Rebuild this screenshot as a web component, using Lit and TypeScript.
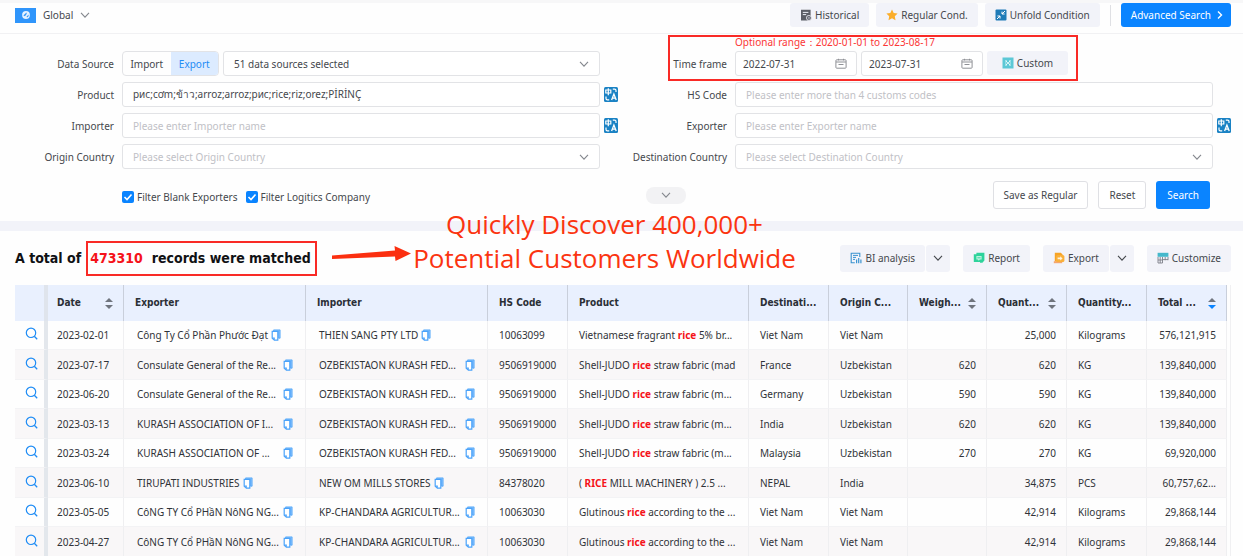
import { LitElement, html, css, svg } from "lit";
import { customElement, property } from "lit/decorators.js";
import { classMap } from "lit/directives/class-map.js";

const chevron = (cls = "") => svg`<svg class="chev ${cls}" viewBox="0 0 10 10" width="10" height="10" aria-hidden="true"><path d="M1 2.8 5 7.2 9 2.8" fill="none" stroke="currentColor" stroke-width="1.1"/></svg>`;

const icons = {
  globe: svg`<svg viewBox="0 0 10 10" width="10" height="10"><circle cx="5" cy="5" r="3.9" fill="#e4f1ff"/><path d="M2.4 5.4 5.4 2.4 5.8 3.8 4 6.2ZM5.6 6.6 7.8 4.4 7.4 6.4 6 7.4Z" fill="#2f95fb"/></svg>`,
  history: svg`<svg viewBox="0 0 12 12" width="12" height="12"><path d="M1 .8h9.6v6.4L7.4 11.4H1Z" fill="#5b5e66"/><path d="M2.8 3.4h5.6M2.8 5.6h3.4" stroke="#eceef5" stroke-width="1"/><circle cx="8.9" cy="8.9" r="2.5" fill="#5b5e66" stroke="#f2f3f9" stroke-width=".8"/><path d="M8.900 7.600v2.600M7.600 8.900h2.600" fill="none" stroke="#b9bcc6" stroke-width=".7"/></svg>`,
  star: svg`<svg viewBox="0 0 12 12" width="12" height="12"><path d="m6 .6 1.7 3.5 3.9.5-2.8 2.7.7 3.9L6 9.3l-3.5 1.9.7-3.9L.4 4.6l3.9-.5Z" fill="#fbae2b"/></svg>`,
  fold: svg`<svg viewBox="0 0 12 12" width="12" height="12"><rect x=".5" y=".5" width="11" height="11" rx="1" fill="#1e7bb8"/><path d="M10 2 7 5M7 2.6V5h2.6M2 10l3-3M2.4 7H5v2.6" fill="none" stroke="#fff" stroke-width="1"/></svg>`,
  custom: svg`<svg viewBox="0 0 12 12" width="12" height="12"><rect x=".5" y=".5" width="11" height="11" fill="#5cc8d6"/><path d="M3.400 3.400l5.200 5.200M8.600 3.400 3.400 8.600M3 5h1.500V3.400M9 5H7.500V3.400M3 7h1.500v1.600M9 7H7.500v1.600" fill="none" stroke="#e8fbfd" stroke-width=".8"/></svg>`,
  calendar: svg`<svg viewBox="0 0 12 12" width="12" height="12"><rect x=".9" y="1.800" width="10.200" height="8.400" rx=".8" fill="none" stroke="#8f9196" stroke-width="1"/><path d="M1 4h10M3.500.8v1.600M8.500.8v1.600M3.500 6.500h5" stroke="#8f9196" stroke-width="1"/></svg>`,
  translate: svg`<svg viewBox="0 0 14 15" width="14" height="15"><rect width="14" height="15" rx="1.500" fill="#1a82c4"/><path d="M1.800 3h5v3h-5ZM4.300 1.200v7" fill="none" stroke="#fff" stroke-width="1.200"/><path d="m7.600 13 2.300-6 2.300 6M8.400 11.200h3" fill="none" stroke="#fff" stroke-width="1.300"/><path d="M8.800 2.200h1.800a1.400 1.400 0 0 1 1.400 1.400v1.400M2 9.600v1.800a1.400 1.400 0 0 0 1.400 1.400h1.800" fill="none" stroke="#fff" stroke-width="1.200"/></svg>`,
  bi: svg`<svg viewBox="0 0 12 12" width="12" height="12"><path d="M9.800 5V1.200H1.200v9.600h3.600" fill="none" stroke="#3a93d0" stroke-width="1.100"/><path d="M3 3.400h5M3 5.400h3M3 7.400h2" stroke="#3a93d0" stroke-width="1"/><path d="M6.600 11.200V7.400M8.700 11.200V6M10.900 11.200V7.400" stroke="#3a93d0" stroke-width="1.200"/></svg>`,
  report: svg`<svg viewBox="0 0 12 12" width="12" height="12"><path d="M3.400.8h8v7.600l-2 2.400H7v-.9H.8V2.200h2.600Z" fill="#2fd39b"/><path d="M3.400 4h5.200v3.600H6.800L5.800 8.800 4.800 7.600H3.400Z" fill="#bdf3df"/><path d="M4.400 5.800h3.200" stroke="#2fd39b" stroke-width=".9"/></svg>`,
  exportFile: svg`<svg viewBox="0 0 12 12" width="12" height="12"><path d="M1.800.8h6l1.800 1.800v7H1.800Z" fill="#f7a325"/><path d="M.8 9.200h8.400v2H.8Z" fill="#f5a56c"/><rect x="3" y="3" width="8.400" height="7" rx="1.600" fill="#f9b03a"/><path d="M4.600 5.600h2.600V4.200L9.600 6.400 7.200 8.400V7.200H4.600Z" fill="#fff3dc"/></svg>`,
  customize: svg`<svg viewBox="0 0 12 12" width="12" height="12"><rect x=".6" y=".8" width="10.800" height="4" fill="#45b8cb"/><path d="M1 5v6h4.500V5M1 8h4.500M3.200 5v6M8.200 5v3.200M11 5v3.200M5.500 7.600H11" fill="none" stroke="#7d8088" stroke-width=".9"/></svg>`,
  search: svg`<svg viewBox="0 0 13 13" width="13" height="13"><circle cx="6" cy="5.800" r="4.700" fill="none" stroke="#1e8cf5" stroke-width="1.200"/><path d="m9.300 9.300 2.900 2.900" stroke="#1e8cf5" stroke-width="1.300"/></svg>`,
  copy: svg`<svg viewBox="0 0 10 12" width="10" height="12"><path d="M2.600.9h6.500v8.300H7.600V2.300h-5Z" fill="#8cc5fc" stroke="#4ba3fa" stroke-width=".8"/><path d="M1.200 2.400h5.600v8.800H3.400L1.200 9.200Z" fill="#fff" stroke="#4ba3fa" stroke-width="1.200"/><path d="M1.200 8.600h2.600v2.600Z" fill="#4ba3fa"/></svg>`,
  next: svg`<svg viewBox="0 0 8 10" width="8" height="10"><path d="m2 1.500 3.500 3.500L2 8.500" fill="none" stroke="#fff" stroke-width="1.400"/></svg>`,
};

type Row = [string, string, string, string, [string, string, string], string, string, string, string, string, string];

const rows: Row[] = [
  ["2023-02-01", "Công Ty Cổ Phần Phước Đạt", "THIEN SANG PTY LTD", "10063099", ["Vietnamese fragrant ", "rice", " 5% br..."], "Viet Nam", "Viet Nam", "", "25,000", "Kilograms", "576,121,915"],
  ["2023-07-17", "Consulate General of the Re...", "OZBEKISTAON KURASH FED...", "9506919000", ["Shell-JUDO ", "rice", " straw fabric (mad"], "France", "Uzbekistan", "620", "620", "KG", "139,840,000"],
  ["2023-06-20", "Consulate General of the Re...", "OZBEKISTAON KURASH FED...", "9506919000", ["Shell-JUDO ", "rice", " straw fabric (m..."], "Germany", "Uzbekistan", "590", "590", "KG", "139,840,000"],
  ["2023-03-13", "KURASH ASSOCIATION OF I...", "OZBEKISTAON KURASH FED...", "9506919000", ["Shell-JUDO ", "rice", " straw fabric (m..."], "India", "Uzbekistan", "620", "620", "KG", "139,840,000"],
  ["2023-03-24", "KURASH ASSOCIATION OF ...", "OZBEKISTAON KURASH FED...", "9506919000", ["Shell-JUDO ", "rice", " straw fabric (m..."], "Malaysia", "Uzbekistan", "270", "270", "KG", "69,920,000"],
  ["2023-06-10", "TIRUPATI INDUSTRIES", "NEW OM MILLS STORES", "84378020", ["( ", "RICE", " MILL MACHINERY ) 2.5 ..."], "NEPAL", "India", "", "34,875", "PCS", "60,757,62..."],
  ["2023-05-05", "CôNG TY Cổ PHầN NôNG NG...", "KP-CHANDARA AGRICULTUR...", "10063030", ["Glutinous ", "rice", " according to the ..."], "Viet Nam", "Viet Nam", "", "42,914", "Kilograms", "29,868,144"],
  ["2023-04-27", "CôNG TY Cổ PHầN NôNG NG...", "KP-CHANDARA AGRICULTUR...", "10063030", ["Glutinous ", "rice", " according to the ..."], "Viet Nam", "Viet Nam", "", "42,914", "Kilograms", "29,868,144"],
];

const shared = css`
  * { box-sizing: border-box; }
  button, input, select { font: inherit; color: inherit; margin: 0; }
  button { display: inline-flex; align-items: center; justify-content: center; border: 0; padding: 0; background: none; white-space: nowrap; cursor: pointer; }
  svg { display: block; flex: none; }
`;

@customElement("records-table")
export class RecordsTable extends LitElement {
  static styles = [shared, css`
    :host { display: block; border-right: 1px solid #f0f0f2; padding-right: 3px; }
    table { width: 100%; table-layout: fixed; border-collapse: separate; border-spacing: 0; }
    .c-icon { width: 33px; }
    .c-date { width: 76px; }
    .c-party { width: 182px; }
    .c-std { width: 80px; }
    .c-num { width: 79px; }
    th { height: 36px; padding: 0 10px 0 11px; background: #e9f0fe; border-right: 1px solid #c9cfdb; text-align: left; font-family: "DejaVu Sans Condensed", sans-serif; font-weight: bold; color: #2b2f36; white-space: nowrap; }
    td { height: 29px; padding: 0 10px 0 11px; border-right: 1px solid #efeff1; border-bottom: 1px solid #f3f3f5; white-space: nowrap; overflow: hidden; color: #303338; }
    tr.odd td { height: 30px; background: #f9f7f8; }
    th.icon, td.icon { padding: 0 0 0 10px; border-right: 4px solid #e3e7ec; }
    th.icon { border-right-color: #dfe4ec; }
    td.icon button { height: 13px; }
    th.date, td.date { padding: 0 10px 0 9px; }
    td.party { padding: 0 12px 0 13px; }
    td.num { text-align: right; }
    .head { display: flex; align-items: center; justify-content: space-between; }
    .name { display: flex; align-items: center; gap: 3px; }
    .name.wide { justify-content: space-between; }
    .name button { height: 12px; }
    mark { background: none; color: #f5121a; font-weight: bold; }
    .sort { display: grid; gap: 2px; height: 12px; }
    .sort i { width: 0; height: 0; border: 4px solid transparent; }
    .sort .up { border-top: 0; border-bottom: 4px solid #70757e; }
    .sort .down { border-bottom: 0; border-top: 4px solid #70757e; }
    .sort.active .down { border-top-color: #0a84ff; }
  `];

  @property({ attribute: false }) rows: Row[] = [];

  private head(label: string, sort = "", cls = "") {
    return html`<th scope="col" class=${cls}><div class="head"><span>${label}</span>${sort
      ? html`<button class=${classMap({ sort: true, active: sort === "desc" })} aria-label="Sort by ${label}"><i class="up"></i><i class="down"></i></button>`
      : ""}</div></th>`;
  }

  private party(name: string) {
    return html`<td class="party"><div class=${classMap({ name: true, wide: name.endsWith("...") })}><span>${name}</span><button aria-label="Copy name">${icons.copy}</button></div></td>`;
  }

  render() {
    return html`<table>
      <colgroup>
        <col class="c-icon"><col class="c-date"><col class="c-party"><col class="c-party"><col class="c-std"><col><col class="c-std"><col class="c-num"><col class="c-num"><col class="c-std"><col class="c-std"><col class="c-std">
      </colgroup>
      <thead><tr>
        <th class="icon"></th>
        ${this.head("Date", "both", "date")}${this.head("Exporter")}${this.head("Importer")}${this.head("HS Code")}${this.head("Product")}
        ${this.head("Destinati...")}${this.head("Origin C...")}${this.head("Weigh...", "both")}${this.head("Quant...", "both")}${this.head("Quantity...")}${this.head("Total ...", "desc")}
      </tr></thead>
      <tbody>${this.rows.map((r, i) => html`<tr class=${classMap({ odd: i % 2 === 1 })}>
        <td class="icon"><button aria-label="View record">${icons.search}</button></td>
        <td class="date">${r[0]}</td>${this.party(r[1])}${this.party(r[2])}<td>${r[3]}</td>
        <td>${r[4][0]}<mark>${r[4][1]}</mark>${r[4][2]}</td>
        <td>${r[5]}</td><td>${r[6]}</td><td class="num">${r[7]}</td><td class="num">${r[8]}</td><td>${r[9]}</td><td class="num">${r[10]}</td>
      </tr>`)}</tbody>
    </table>`;
  }
}

@customElement("app-root")
export class AppRoot extends LitElement {
  static styles = [shared, css`
    :host { display: block; position: relative; height: 100vh; overflow: hidden; background: #fefefe; color: #45484d; font: 10px/14px "Noto Sans", sans-serif; }
    header { display: flex; align-items: center; gap: 7px; height: 34px; padding: 0 12px 6px 15px; border-top: 3px solid #f7f7f8; border-bottom: 1px solid #f1f1f3; }
    .region { display: flex; align-items: center; gap: 7px; margin-right: auto; }
    .flag { display: grid; place-items: center; width: 21px; height: 15px; background: #2f95fb; }
    .soft { height: 24px; gap: 3px; padding: 0 10px; background: #f2f3f9; border-radius: 3px; }
    .rule { width: 1px; height: 21px; margin: 0 3px; background: #dfe0e4; }
    .primary { background: #0a84ff; color: #fff; border-radius: 3px; }
    .advanced { height: 24px; gap: 5px; padding: 0 7px 0 10px; }
    .chev { color: #85888e; }
    .form { display: grid; grid-template-columns: 122px 1fr 18px 117px 1fr 18px; row-gap: 6px; padding: 0 12px 0 0; }
    .range { grid-column: 5; height: 11px; padding-top: 1px; color: #fb3636; white-space: nowrap; }
    .form > label { grid-column: 1; align-self: center; padding-right: 8px; text-align: right; }
    .form > .second { grid-column: 4; }
    .field { display: flex; align-items: center; height: 25px; min-width: 0; border: 1px solid #e2e3e6; border-radius: 3px; background: #fff; }
    .field input, .field select { flex: 1; width: 0; height: 23px; padding: 0 10px; border: 0; outline: 0; background: none; appearance: none; }
    .field input::placeholder { color: #bfc1c6; opacity: 1; }
    .field select.empty { color: #bfc1c6; }
    .field .chev { margin-right: 10px; }
    .translate { align-self: center; margin-left: 4px; height: 15px; }
    .source, .dates { display: flex; gap: 4px; }
    .source .field { flex: 1; }
    .dates .field { flex: 0 1 122px; }
    .dates .field input { padding: 0 7px; }
    .dates .field svg { margin-right: 9px; }
    .dates .soft { width: 81px; padding: 0; }
    .toggle { display: flex; width: 97px; border: 1px solid #e2e3e6; border-radius: 4px; overflow: hidden; }
    .toggle button { flex: 1; height: 23px; }
    .toggle .on { background: #dcebff; color: #1e8cf5; }
    .actions { display: grid; grid-template-columns: 1fr 40px 1fr; align-items: center; padding: 12px 33px 12px 122px; }
    .checks { display: flex; gap: 8px; padding-top: 3px; }
    .checks label { display: flex; align-items: center; gap: 3px; white-space: nowrap; }
    .checks input { appearance: none; width: 12px; height: 12px; border-radius: 2px; background: #0a84ff url("data:image/svg+xml,%3Csvg xmlns='http://www.w3.org/2000/svg' viewBox='0 0 12 12'%3E%3Cpath d='M2.500 6 5 8.500 9.500 3.500' fill='none' stroke='white' stroke-width='1.600'/%3E%3C/svg%3E"); }
    .more { height: 17px; border-radius: 8px; background: #f2f2f4; }
    .submit { display: flex; justify-content: flex-end; gap: 10px; }
    .submit button { height: 28px; padding: 0 11px; border-radius: 3px; }
    .submit .plain { padding: 0 10px; border: 1px solid #dfe0e4; background: #fff; }
    .band { height: 10px; background: #f2f3f9; }
    .summary { display: flex; align-items: center; height: 54px; padding: 0 12px 0 15px; }
    h1 { display: flex; align-items: center; gap: 5px; margin: 0 auto 0 0; font: bold 14px/18px "DejaVu Sans Condensed", sans-serif; color: #101114; white-space: nowrap; }
    .count { display: flex; gap: 9px; height: 35px; align-items: center; padding: 0 4px 0 2px; border: 2px solid #f92a26; }
    .count b { color: #f5121a; }
    .tools { display: flex; gap: 13px; }
    .tools .soft { height: 27px; }
    .split { display: flex; gap: 1px; }
    .split .soft:last-child { width: 24px; padding: 0; }
    .split .chev { color: #45484d; }
    records-table { margin: 0 12px 0 15px; }
    .frame { position: absolute; top: 35px; right: 165px; width: 410px; height: 46px; border: 2px solid #f92a26; pointer-events: none; }
    .slogan { position: absolute; top: 207px; left: 0; width: 100%; padding-right: 34px; margin: 0; text-align: center; font: 26px/34px "Open Sans", sans-serif; color: #fb3410; pointer-events: none; }
    .arrow { position: absolute; top: 244px; left: 332px; pointer-events: none; }
  `];

  render() {
    return html`
      <header>
        <div class="region"><span class="flag">${icons.globe}</span><span>Global</span>${chevron()}</div>
        <button class="soft">${icons.history}Historical</button>
        <button class="soft">${icons.star}Regular Cond.</button>
        <button class="soft">${icons.fold}Unfold Condition</button>
        <span class="rule"></span>
        <button class="primary advanced">Advanced Search ${icons.next}</button>
      </header>
      <section class="form">
        <span class="range">Optional range：2020-01-01 to 2023-08-17</span>

        <label for="source">Data Source</label>
        <div class="source">
          <div class="toggle"><button>Import</button><button class="on">Export</button></div>
          <div class="field"><select id="source"><option>51 data sources selected</option></select>${chevron()}</div>
        </div>
        <label class="second" for="from">Time frame</label>
        <div class="dates">
          <div class="field"><input id="from" value="2022-07-31">${icons.calendar}</div>
          <div class="field"><input aria-label="End date" value="2023-07-31">${icons.calendar}</div>
          <button class="soft">${icons.custom}Custom</button>
        </div>

        <label for="product">Product</label>
        <div class="field"><input id="product" value="рис;cơm;ข้าว;arroz;arroz;рис;rice;riz;orez;PİRİNÇ"></div>
        <button class="translate" aria-label="Translate">${icons.translate}</button>
        <label class="second" for="hs">HS Code</label>
        <div class="field"><input id="hs" placeholder="Please enter more than 4 customs codes"></div>

        <label for="importer">Importer</label>
        <div class="field"><input id="importer" placeholder="Please enter Importer name"></div>
        <button class="translate" aria-label="Translate">${icons.translate}</button>
        <label class="second" for="exporter">Exporter</label>
        <div class="field"><input id="exporter" placeholder="Please enter Exporter name"></div>
        <button class="translate" aria-label="Translate">${icons.translate}</button>

        <label for="origin">Origin Country</label>
        <div class="field"><select id="origin" class="empty"><option>Please select Origin Country</option></select>${chevron()}</div>
        <label class="second" for="dest">Destination Country</label>
        <div class="field"><select id="dest" class="empty"><option>Please select Destination Country</option></select>${chevron()}</div>
      </section>
      <section class="actions">
        <div class="checks">
          <label><input type="checkbox" checked>Filter Blank Exporters</label>
          <label><input type="checkbox" checked>Filter Logitics Company</label>
        </div>
        <button class="more" aria-label="More conditions">${chevron()}</button>
        <div class="submit">
          <button class="plain">Save as Regular</button>
          <button class="plain">Reset</button>
          <button class="primary">Search</button>
        </div>
      </section>
      <div class="band"></div>
      <section class="summary">
        <h1>A total of <span class="count"><b>473310</b><span>records were matched</span></span></h1>
        <div class="tools">
          <div class="split"><button class="soft">${icons.bi}BI analysis</button><button class="soft" aria-label="BI analysis options">${chevron()}</button></div>
          <button class="soft">${icons.report}Report</button>
          <div class="split"><button class="soft">${icons.exportFile}Export</button><button class="soft" aria-label="Export options">${chevron()}</button></div>
          <button class="soft">${icons.customize}Customize</button>
        </div>
      </section>
      <records-table .rows=${rows}></records-table>

      <div class="frame"></div>
      <svg class="arrow" viewBox="0 0 80 20" width="80" height="20" aria-hidden="true"><path d="M0 11.500 63 6.500 62.500 2 79 9.500 63.500 17 63 12.500 0 15Z" fill="#fb2f10"/></svg>
      <p class="slogan">Quickly Discover 400,000+<br>Potential Customers Worldwide</p>
    `;
  }
}
